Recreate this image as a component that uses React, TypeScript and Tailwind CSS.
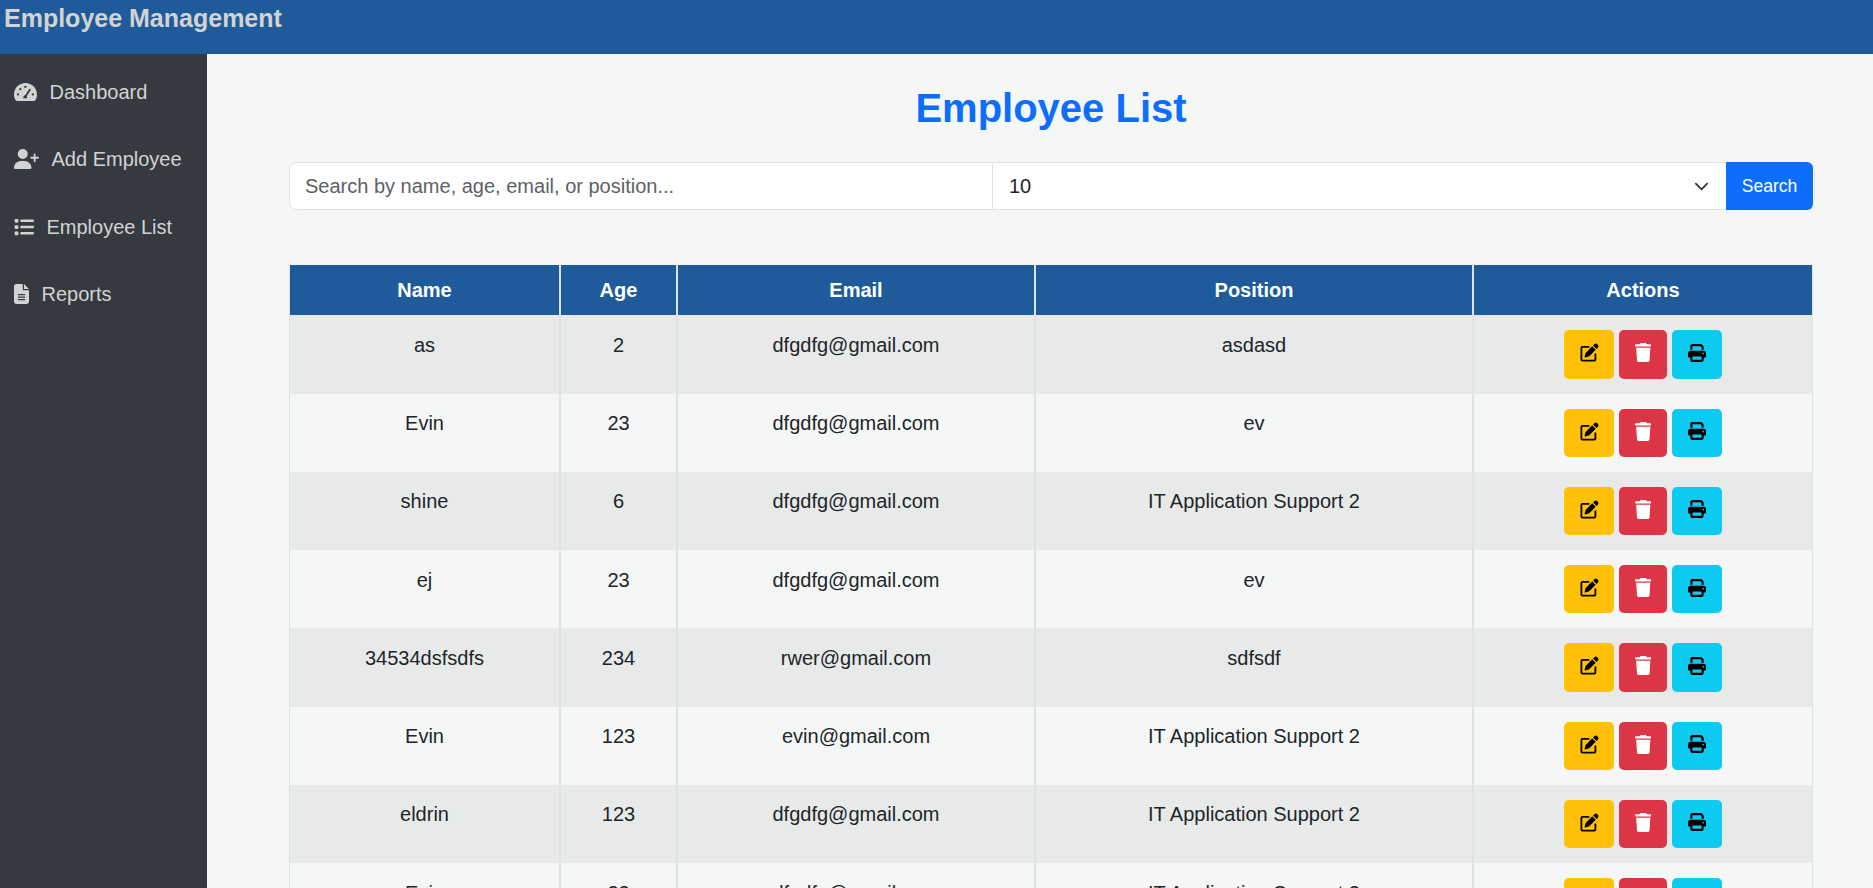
import React from "react";
import { FaUserPlus, FaList, FaFileLines, FaTrash, FaPrint } from "react-icons/fa6";

function Gauge() {
  return (
    <svg width="23" height="18" viewBox="0 0 23 18" className="shrink-0">
      <path
        fill="currentColor"
        d="M11.4 0C5.1 0 0 5.1 0 11.4c0 2 .5 3.900 1.400 5.500.4.700 1 1.100 1.700 1.100h16.700c.7 0 1.300-.4 1.700-1.100.9-1.600 1.400-3.500 1.400-5.500C22.900 5.100 17.700 0 11.400 0z"
      />
      <g fill="#343a40">
        <circle cx="6.3" cy="6.200" r="1.150" />
        <circle cx="4" cy="11.400" r="1.150" />
        <circle cx="11.400" cy="3.900" r="1.150" />
        <circle cx="18.800" cy="11.400" r="1.150" />
        <path d="M9.200 15.200c-.2-1.400.6-2.700 2-2.900l3.900-6c.3-.5.9-.6 1.300-.3.400.3.500.8.200 1.200l-3.900 6c.5.600.7 1.300.5 2z" />
      </g>
    </svg>
  );
}

function Edit() {
  return (
    <svg width="19" height="19" viewBox="0 0 19 19" fill="currentColor">
      <path
        d="M9.300 3.900H2.400a1 1 0 0 0-1 1v11.700a1 1 0 0 0 1 1h12a1 1 0 0 0 1-1v-6"
        fill="none"
        stroke="currentColor"
        strokeWidth="1.800"
      />
      <path d="M12.200 3.300l3.500 3.500-6.200 6.200c-.3.300-.6.500-1 .6l-3.100.9c-.5.100-.9-.3-.8-.8l.9-3.100c.1-.4.300-.7.600-1z" />
      <path d="M13.100 2.400l1.200-1.200c.9-.9 2.200-.9 3 0l.5.500c.9.900.9 2.200 0 3l-1.200 1.200z" />
    </svg>
  );
}

const nav = [
  { label: "Dashboard", icon: <Gauge /> },
  { label: "Add Employee", icon: <FaUserPlus className="h-[20px] w-[25px] shrink-0" /> },
  { label: "Employee List", icon: <FaList className="size-5 shrink-0" /> },
  { label: "Reports", icon: <FaFileLines className="h-[20px] w-[15px] shrink-0" /> },
];

const columns = ["Name", "Age", "Email", "Position", "Actions"];

const rows = [
  ["as", "2", "dfgdfg@gmail.com", "asdasd"],
  ["Evin", "23", "dfgdfg@gmail.com", "ev"],
  ["shine", "6", "dfgdfg@gmail.com", "IT Application Support 2"],
  ["ej", "23", "dfgdfg@gmail.com", "ev"],
  ["34534dsfsdfs", "234", "rwer@gmail.com", "sdfsdf"],
  ["Evin", "123", "evin@gmail.com", "IT Application Support 2"],
  ["eldrin", "123", "dfgdfg@gmail.com", "IT Application Support 2"],
  ["Evin", "23", "dfgdfg@gmail.com", "IT Application Support 2"],
];

const grid = "grid grid-cols-[271px_117px_358px_438px_340px]";
const edge = "border-x border-[#dee2e6]";
const action = "flex h-[48.25px] items-center justify-center rounded-[5px] pb-[3px]";

export default function App() {
  return (
    <div className="flex h-[888px] w-[1873px] flex-col overflow-hidden bg-[#f5f7f6] font-['Liberation_Sans',Arial,sans-serif] text-[20px] leading-[30px] text-[#212529]">
      <header className="h-[54px] shrink-0 bg-[#1f5b9a] pl-[4px] text-[25px] font-bold leading-[37px] text-[#d3d3d3]">
        Employee Management
      </header>
      <div className="flex min-h-0 flex-1">
        <aside className="flex w-[207px] shrink-0 flex-col gap-[37.2px] bg-[#343a40] pt-[23.3px] pl-[14px] text-[#d3d3d3]">
          {nav.map((n) => (
            <a key={n.label} className="flex h-[30px] items-center gap-[12.5px] whitespace-nowrap">
              {n.icon}
              <span>{n.label}</span>
            </a>
          ))}
        </aside>
        <main className="min-w-0 flex-1 overflow-hidden pr-[60px] pl-[82px]">
          <h1 className="mt-[30px] text-center text-[40px] font-bold leading-[48px] text-[#0d6efd]">Employee List</h1>
          <div className="mt-[30px] flex h-[48px]">
            <input
              placeholder="Search by name, age, email, or position..."
              className="w-[704px] rounded-l-[7.5px] border border-[#dee2e6] bg-white px-[15px] outline-none placeholder:text-[#5d6166]"
            />
            <div className="flex flex-1 items-center justify-between border-y border-[#dee2e6] bg-white pr-[17.5px] pl-[16px]">
              <span>10</span>
              <svg className="size-[15px]" viewBox="0 0 16 16" fill="none">
                <path d="m2 5 6 6 6-6" stroke="#343a40" strokeWidth="2" strokeLinecap="round" strokeLinejoin="round" />
              </svg>
            </div>
            <button className="w-[87px] rounded-r-[6px] bg-[#0d6efd] pb-px text-[17.5px] leading-[26px] text-white">Search</button>
          </div>
          <div className="mt-[55px] w-[1524px]">
            <div className={`${grid} h-[50.25px] font-bold text-white`}>
              {columns.map((c) => (
                <div key={c} className={`${edge} bg-[#1f5b9a] pt-[10px] text-center`}>
                  {c}
                </div>
              ))}
            </div>
            {rows.map((r, i) => (
              <div key={i} className={`${grid} h-[78.25px] ${i % 2 === 0 ? "bg-[#e8eae9]" : ""}`}>
                {r.map((v, j) => (
                  <div key={j} className={`${edge} pt-[14.7px] text-center`}>
                    {v}
                  </div>
                ))}
                <div className={`${edge} flex justify-center gap-[5px] pt-[15px]`}>
                  <button className={`${action} w-[50px] bg-[#ffc107] text-black`}>
                    <Edit />
                  </button>
                  <button className={`${action} w-[48px] bg-[#dc3545] text-white`}>
                    <FaTrash className="h-[19px] w-[16.5px]" />
                  </button>
                  <button className={`${action} w-[50px] bg-[#0dcaf0] text-black`}>
                    <FaPrint className="size-[18px]" />
                  </button>
                </div>
              </div>
            ))}
          </div>
        </main>
      </div>
    </div>
  );
}
